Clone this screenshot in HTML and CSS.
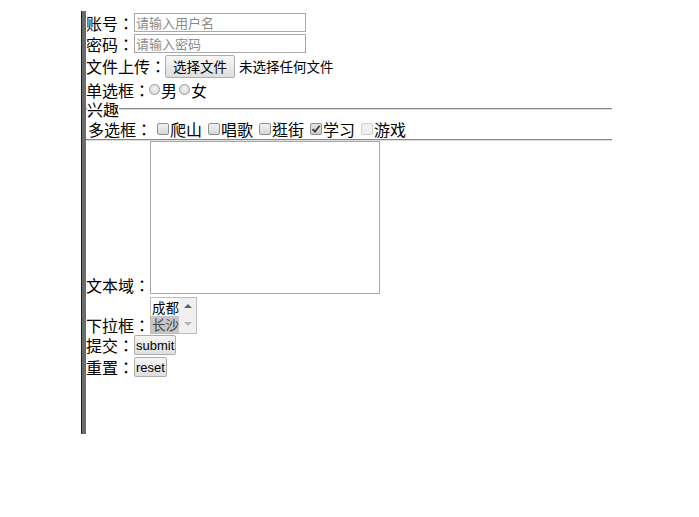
FILE: index.html
```html
<!DOCTYPE html>
<html>
<head>
    <meta charset="utf-8">
    <title>表单</title>
    <link rel="stylesheet" href="styles.css">
</head>
<body>
    <div class="page">
        <form class="form-box" action="#" method="post">
            <div class="row row-text">
                <label class="form-label" for="user">账号：</label>
                <input class="form-input" type="text" id="user" name="user" placeholder="请输入用户名">
            </div>
            <div class="row row-text">
                <label class="form-label" for="pwd">密码：</label>
                <input class="form-input" type="password" id="pwd" name="pwd" placeholder="请输入密码">
            </div>
            <div class="row row-file">
                <span class="form-label">文件上传：</span>
                <span class="file-btn">选择文件</span>
                <span class="file-name">未选择任何文件</span>
            </div>
            <div class="row row-radio">
                <span class="form-label">单选框：</span>
                <span class="radio"></span><span class="opt">男</span>
                <span class="radio"></span><span class="opt">女</span>
            </div>
            <fieldset class="hobby">
                <legend>兴趣</legend>
                <div class="row row-check">
                    <span class="form-label">多选框：</span>
                    <span class="check"></span><span class="opt">爬山</span>
                    <span class="check"></span><span class="opt">唱歌</span>
                    <span class="check"></span><span class="opt">逛街</span>
                    <span class="check checked">
                        <svg width="10" height="10" viewBox="0 0 10 10"><path d="M1.5 5.2 L4 7.6 L8.6 1.8" fill="none" stroke="#3c3c3c" stroke-width="1.8"/></svg>
                    </span><span class="opt">学习</span>
                    <span class="check disabled"></span><span class="opt">游戏</span>
                </div>
            </fieldset>
            <div class="row row-area">
                <label class="form-label" for="intro">文本域：</label>
                <textarea class="area" id="intro" name="intro"></textarea>
            </div>
            <div class="row row-select">
                <span class="form-label">下拉框：</span>
                <div class="listbox">
                    <div class="options">
                        <div class="option">成都</div>
                        <div class="option selected">长沙</div>
                    </div>
                    <div class="scroll">
                        <span class="arrow up"></span>
                        <span class="arrow down"></span>
                    </div>
                </div>
            </div>
            <div class="row row-btn">
                <span class="form-label">提交：</span>
                <input class="btn" type="submit" value="submit">
            </div>
            <div class="row row-btn">
                <span class="form-label">重置：</span>
                <input class="btn" type="reset" value="reset">
            </div>
        </form>
    </div>
</body>
</html>
```

FILE: styles.css
```css
body {
    margin: 0;
    background: #fff;
    font-family: "Noto Sans CJK TC", "Noto Sans CJK SC", sans-serif;
    font-size: 16px;
    color: #000;
}

.page {
    margin: 11px 0 0 81px;
    width: 530px;
    height: 423px;
    border-left: 1px solid #222;
}

.form-box {
    height: 100%;
    border-left: 4px solid #6b6b6b;
    padding-top: 1px;
}

.row {
    display: flex;
    align-items: center;
    line-height: 18px;
}

.form-label {
    white-space: nowrap;
}

.row-text {
    height: 21px;
}

.form-input {
    box-sizing: border-box;
    width: 172px;
    height: 19px;
    margin: 0;
    padding: 0 1px;
    border: 1px solid #a9a9a9;
    font-family: "Noto Sans CJK SC", sans-serif;
    font-size: 13px;
    outline: none;
}

.form-input::placeholder {
    color: #8a8a8a;
}

.row-file {
    height: 24px;
}

.file-btn {
    box-sizing: border-box;
    height: 23px;
    margin-left: -1px;
    padding: 0 7px;
    border: 1px solid #adadad;
    border-radius: 2px;
    background: linear-gradient(#f6f6f6, #dedede);
    font-family: "Noto Sans CJK SC", sans-serif;
    font-size: 13.5px;
    line-height: 21px;
}

.file-name {
    margin-left: 4px;
    font-family: "Noto Sans CJK SC", sans-serif;
    font-size: 13.5px;
}

.row-radio {
    height: 21px;
    margin-top: 1px;
}

.radio {
    box-sizing: border-box;
    width: 11px;
    height: 11px;
    margin: 0 1px 0 -1px;
    border: 1px solid #999;
    border-radius: 50%;
    background: radial-gradient(circle at 50% 40%, #f4f4f4, #d2d2d2);
}

.radio + .opt {
    margin-right: 3px;
}

.hobby {
    margin: 0;
    padding: 0 2px;
    border: none;
    border-top: 2px groove #ddd;
    border-bottom: 2px groove #ddd;
}

.hobby legend {
    padding: 0;
    margin-left: -1px;
    line-height: 18px;
}

.row-check {
    height: 21px;
}

.check {
    box-sizing: border-box;
    display: flex;
    align-items: center;
    justify-content: center;
    width: 12px;
    height: 12px;
    margin: 0 1px 0 5px;
    border: 1px solid #8e8e8e;
    border-radius: 2px;
    background: linear-gradient(#f2f2f2, #d6d6d6);
}

.check.checked {
    background: linear-gradient(#e4e4e4, #cfcfcf);
}

.check.disabled {
    border-color: #d0d0d0;
    background: #f0f0f0;
}

.check + .opt {
    margin-right: 1px;
}

.row-area {
    align-items: flex-end;
}

.area {
    box-sizing: border-box;
    display: block;
    width: 230px;
    height: 153px;
    margin: 0;
    border: 1px solid #a9a9a9;
    resize: none;
}

.row-select {
    margin-top: 3px;
    align-items: flex-end;
}

.listbox {
    display: flex;
    box-sizing: border-box;
    width: 47px;
    height: 37px;
    border: 1px solid #bdbdbd;
    font-family: "Noto Sans CJK SC", sans-serif;
    font-size: 13.5px;
    background: #fff;
}

.options {
    flex: 1;
    padding-top: 1px;
}

.option {
    height: 17px;
    line-height: 17px;
    padding-left: 1px;
}

.option.selected {
    background: #c6c6c6;
    color: #444;
}

.scroll {
    position: relative;
    width: 17px;
    background: #f0f0f0;
}

.arrow {
    position: absolute;
    left: 5px;
    width: 0;
    height: 0;
    border-left: 4px solid transparent;
    border-right: 4px solid transparent;
}

.arrow.up {
    top: 6px;
    border-bottom: 4px solid #606060;
}

.arrow.down {
    bottom: 7px;
    border-top: 4px solid #b5b5b5;
}

.row-btn {
    height: 22px;
}

.btn {
    box-sizing: border-box;
    height: 20px;
    margin: 0;
    padding: 0 1px;
    border: 1px solid #adadad;
    border-radius: 2px;
    background: linear-gradient(#f6f6f6, #dedede);
    font-family: "Liberation Sans", Arial, sans-serif;
    font-size: 13px;
    color: #000;
}
```
